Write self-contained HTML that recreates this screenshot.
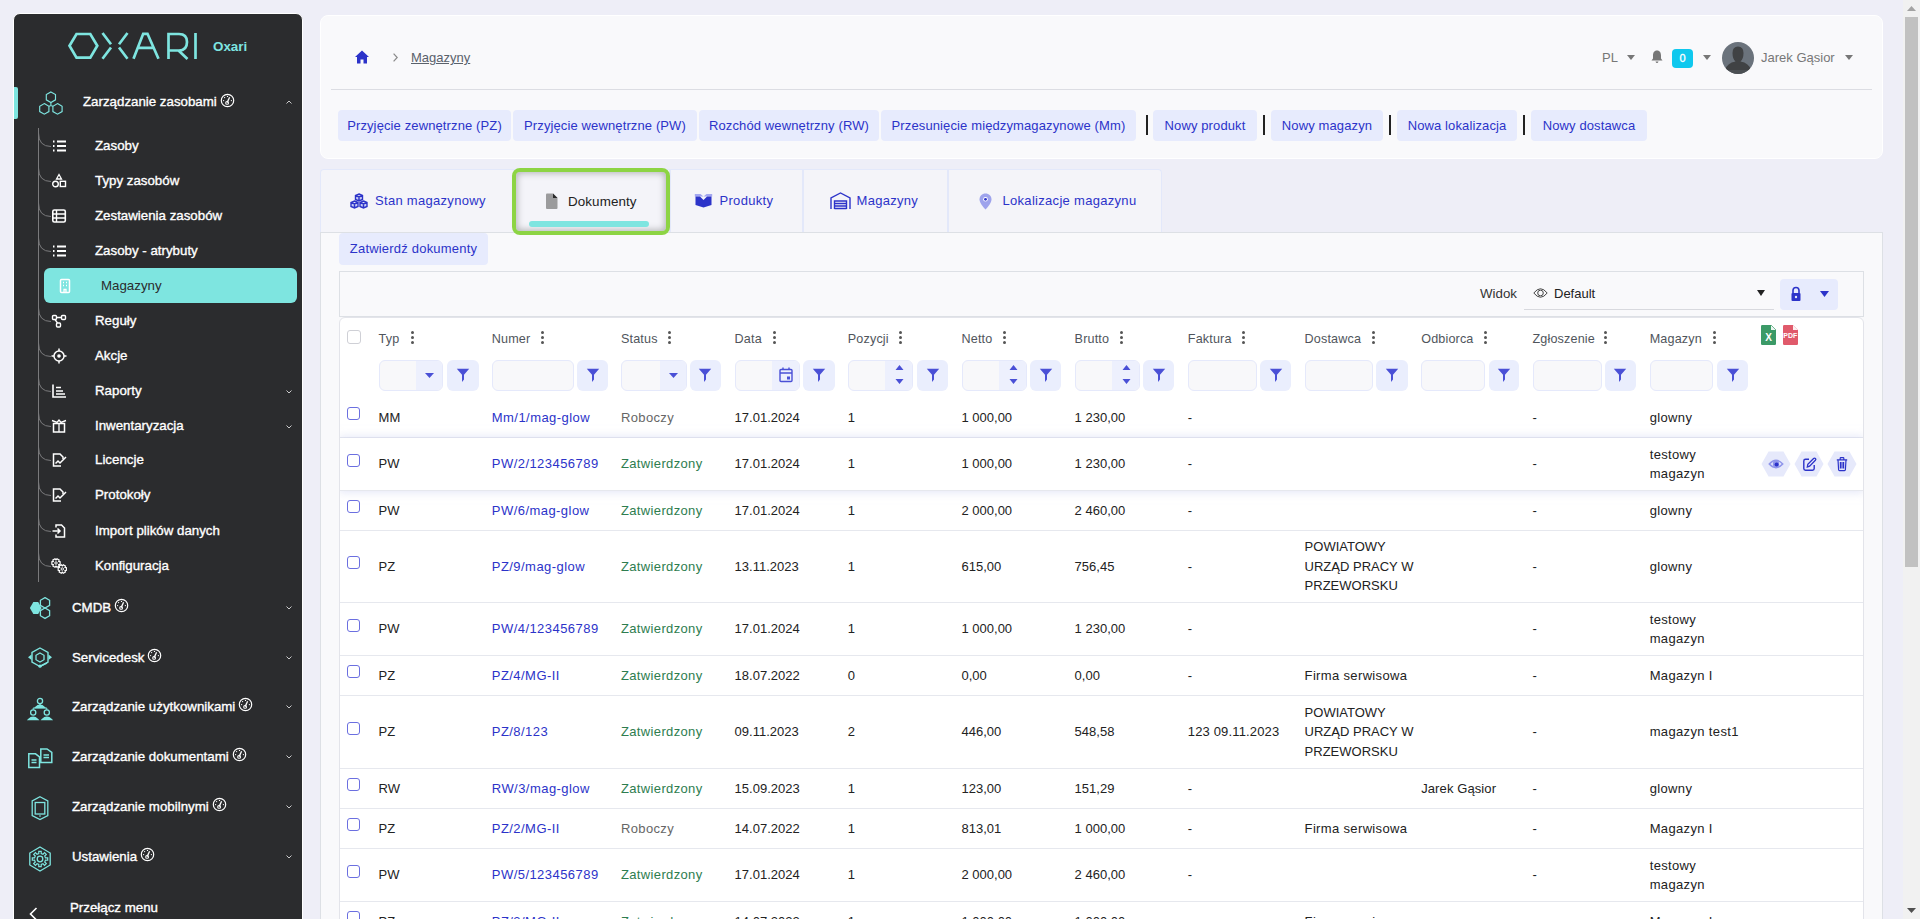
<!DOCTYPE html><html><head><meta charset="utf-8"><title>Magazyny</title><style>
*{box-sizing:border-box;margin:0;padding:0}
html,body{width:1920px;height:919px;overflow:hidden}
body{background:#eeeef7;font-family:"Liberation Sans",sans-serif;font-size:13px;color:#222;position:relative}
.abs{position:absolute}
#sb{position:absolute;left:13px;top:13px;width:290px;height:930px;background:#2b2c2e;border:1px solid #fff;border-radius:7px}
.sbt{position:absolute;color:#fff;font-size:13.3px;-webkit-text-stroke:0.35px #fff;white-space:nowrap;line-height:16px}
.sbs{position:absolute;color:#fff;font-size:13.3px;-webkit-text-stroke:0.35px #fff;white-space:nowrap;line-height:16px}
.caret{position:absolute;left:286px;width:6px;height:6px}
#hdr{position:absolute;left:320px;top:15px;width:1563px;height:144px;background:#f9f9fb;border:1px solid #fff;border-radius:8px}
.btn{position:absolute;top:110px;height:31px;background:#e7ebfd;border-radius:4px;color:#2c33c9;line-height:32px;letter-spacing:0.12px;text-align:center;white-space:nowrap}
.sep{position:absolute;top:115px;width:2px;height:20px;background:#222}
.tab{position:absolute;top:169px;height:64px;background:#f4f4f9;border:1px solid #e3e8f7;border-bottom:none;border-radius:4px 4px 0 0}
.tabt{position:absolute;color:#2c33c9;white-space:nowrap;line-height:16px;letter-spacing:0.3px}
#card{position:absolute;left:320px;top:232px;width:1563px;height:700px;background:#f9f9fb;border:1px solid #dde0e5;border-bottom:none}
.th{position:absolute;top:330.5px;color:#50555c;font-size:12.6px;letter-spacing:0.15px;white-space:nowrap;line-height:16px}
.keb{position:absolute;top:331px;width:3px;height:13px}
.fin{position:absolute;top:360px;height:31px;background:#f8f8fa;border:1px solid #e5e9fb;border-radius:6px}
.fbt{position:absolute;top:360px;height:31px;background:#eaeefd;border-radius:6px}
.row{position:absolute;left:340px;width:1523px;background:#fff;border-bottom:1px solid #e6e8ee}
.c{position:absolute;white-space:nowrap;line-height:19.5px;z-index:2}
.cb{position:absolute;left:7px;width:14px;height:14px;border:1.5px solid #6b6fd8;border-radius:3px;background:#fff}
</style></head><body>
<div id="sb"></div>
<svg class="abs" style="left:66px;top:30px" width="140" height="32" viewBox="0 0 140 32" fill="none" stroke="#7ee5e0" stroke-width="2.7">
<path d="M10.5 4 H24.3 L31.3 15.8 L24.3 27.6 H10.5 L3.5 15.8 Z"/>
<path d="M36.5 3 L45 14.3 M36.5 28.8 L45 17.5 M61.5 3 L53 14.3 M61.5 28.8 L53 17.5"/>
<path d="M67.5 28.8 L77.2 3.8 H81.5 L92.5 28.8 M72.5 17.8 H87"/>
<path d="M102.5 29 V4 H113 Q121 4 121 12 Q121 20.5 113 20.5 H102.5 M112.5 20.5 L121.5 29"/>
<path d="M129.5 3 V29"/>
</svg>
<div class="abs" style="left:213px;top:39px;color:#7ee5e0;font-weight:bold;font-size:13.4px;line-height:16px">Oxari</div>
<div class="abs" style="left:14px;top:87px;width:4px;height:32px;background:#7ee5e0;border-radius:0 2px 2px 0"></div>
<svg class="abs" style="left:37px;top:90px" width="28" height="28" viewBox="0 0 28 28" fill="none" stroke="#7ee5e0" stroke-width="1.15">
<path d="M13.9 1.9000000000000004 L18.5 4.550000000000001 V9.85 L13.9 12.5 L9.3 9.85 V4.550000000000001 Z"/><path d="M7.3 13.599999999999998 L11.899999999999999 16.25 V21.549999999999997 L7.3 24.2 L2.7 21.549999999999997 V16.25 Z"/><path d="M20.5 13.599999999999998 L25.1 16.25 V21.549999999999997 L20.5 24.2 L15.9 21.549999999999997 V16.25 Z"/><path d="M13.9 12.5 V15.8 M11.9 16.2 L13.9 15.4 L15.9 16.2"/></svg>
<div class="sbt" style="left:83px;top:94px">Zarządzanie zasobami</div>
<svg class="abs" style="left:220px;top:93px" width="15" height="15" viewBox="0 0 15 15" fill="none" stroke="#fff" stroke-width="1.2"><circle cx="7.5" cy="7.5" r="6.2"/><path d="M7.1 9.6 L9.6 4.3" stroke-width="1.3"/><circle cx="7.1" cy="9.9" r="1.4" stroke-width="1.1"/><circle cx="7.5" cy="3.4" r="0.65" fill="#fff" stroke="none"/><circle cx="4.6" cy="4.6" r="0.65" fill="#fff" stroke="none"/><circle cx="3.6" cy="7.6" r="0.65" fill="#fff" stroke="none"/><circle cx="11.4" cy="7.6" r="0.65" fill="#fff" stroke="none"/></svg>
<svg class="abs" style="left:286px;top:100px" width="6" height="4" viewBox="0 0 6 4" fill="none" stroke="#ccc" stroke-width="1"><path d="M0.5 3.5 L3 1 L5.5 3.5"/></svg>
<div class="abs" style="left:38px;top:128px;width:1px;height:454px;background:#7a7a7c"></div>
<svg class="abs" style="left:38px;top:133px" width="14" height="15" viewBox="0 0 14 15" fill="none" stroke="#7a7a7c" stroke-width="1"><path d="M0.5 0 Q0.5 13.5 13 13.5"/></svg>
<svg class="abs" style="left:51px;top:138px" width="16" height="16" viewBox="0 0 16 16" fill="none" stroke="#fff" stroke-width="1.6"><path d="M6 3.5 H15 M6 8 H15 M6 12.5 H15" stroke-width="1.8"/><path d="M2 3.5 h1.5 M2 8 h1.5 M2 12.5 h1.5" stroke-width="2.2"/></svg>
<div class="sbs" style="left:95px;top:138px">Zasoby</div>
<svg class="abs" style="left:38px;top:168px" width="14" height="15" viewBox="0 0 14 15" fill="none" stroke="#7a7a7c" stroke-width="1"><path d="M0.5 0 Q0.5 13.5 13 13.5"/></svg>
<svg class="abs" style="left:51px;top:173px" width="16" height="16" viewBox="0 0 16 16" fill="none" stroke="#fff" stroke-width="1.6"><path d="M8 1.5 L10.5 6 H5.5 Z" stroke-width="1.3"/><circle cx="4.5" cy="11" r="2.8" stroke-width="1.4"/><rect x="9.3" y="8.3" width="5.2" height="5.2" stroke-width="1.4"/></svg>
<div class="sbs" style="left:95px;top:173px">Typy zasobów</div>
<svg class="abs" style="left:38px;top:203px" width="14" height="15" viewBox="0 0 14 15" fill="none" stroke="#7a7a7c" stroke-width="1"><path d="M0.5 0 Q0.5 13.5 13 13.5"/></svg>
<svg class="abs" style="left:51px;top:208px" width="16" height="16" viewBox="0 0 16 16" fill="none" stroke="#fff" stroke-width="1.6"><rect x="1.8" y="2" width="12.5" height="12" rx="1.5" stroke-width="1.6"/><path d="M1.8 6 H14.3 M1.8 10 H14.3 M5.5 2 V14" stroke-width="1.4"/></svg>
<div class="sbs" style="left:95px;top:208px">Zestawienia zasobów</div>
<svg class="abs" style="left:38px;top:238px" width="14" height="15" viewBox="0 0 14 15" fill="none" stroke="#7a7a7c" stroke-width="1"><path d="M0.5 0 Q0.5 13.5 13 13.5"/></svg>
<svg class="abs" style="left:51px;top:243px" width="16" height="16" viewBox="0 0 16 16" fill="none" stroke="#fff" stroke-width="1.6"><path d="M6 3.5 H15 M6 8 H15 M6 12.5 H15" stroke-width="1.8"/><path d="M2 3.5 h1.5 M2 8 h1.5 M2 12.5 h1.5" stroke-width="2.2"/></svg>
<div class="sbs" style="left:95px;top:243px">Zasoby - atrybuty</div>
<div class="abs" style="left:44px;top:268px;width:253px;height:35px;background:#7ee5e0;border-radius:6px"></div>
<svg class="abs" style="left:57px;top:278px" width="16" height="16" viewBox="0 0 16 16" fill="none" stroke="#fff" stroke-width="1.6"><rect x="3.5" y="1.5" width="9" height="13" rx="1" stroke-width="1.5"/><path d="M6 4.5 h1 M9 4.5 h1 M6 7.5 h1 M9 7.5 h1" stroke-width="1.5"/><path d="M7 14.5 v-3 h2 v3" stroke-width="1.3"/></svg>
<div class="sbs" style="left:101px;top:278px;color:#2b2c2e;-webkit-text-stroke:0;font-size:13.3px">Magazyny</div>
<svg class="abs" style="left:38px;top:308px" width="14" height="15" viewBox="0 0 14 15" fill="none" stroke="#7a7a7c" stroke-width="1"><path d="M0.5 0 Q0.5 13.5 13 13.5"/></svg>
<svg class="abs" style="left:51px;top:313px" width="16" height="16" viewBox="0 0 16 16" fill="none" stroke="#fff" stroke-width="1.6"><rect x="1.5" y="2.5" width="4" height="4" rx="1" stroke-width="1.4"/><rect x="10.5" y="2.5" width="4" height="4" rx="1" stroke-width="1.4"/><rect x="5.5" y="10" width="4" height="4" rx="1" stroke-width="1.4"/><path d="M5.5 4.5 H10.5 M4 6.5 L6.5 10" stroke-width="1.3"/></svg>
<div class="sbs" style="left:95px;top:313px">Reguły</div>
<svg class="abs" style="left:38px;top:343px" width="14" height="15" viewBox="0 0 14 15" fill="none" stroke="#7a7a7c" stroke-width="1"><path d="M0.5 0 Q0.5 13.5 13 13.5"/></svg>
<svg class="abs" style="left:51px;top:348px" width="16" height="16" viewBox="0 0 16 16" fill="none" stroke="#fff" stroke-width="1.6"><circle cx="8" cy="8" r="5" stroke-width="1.5"/><circle cx="8" cy="8" r="1.8" fill="#fff" stroke="none"/><path d="M8 0.5 v2.5 M8 13 v2.5 M0.5 8 h2.5 M13 8 h2.5" stroke-width="1.5"/></svg>
<div class="sbs" style="left:95px;top:348px">Akcje</div>
<svg class="abs" style="left:38px;top:378px" width="14" height="15" viewBox="0 0 14 15" fill="none" stroke="#7a7a7c" stroke-width="1"><path d="M0.5 0 Q0.5 13.5 13 13.5"/></svg>
<svg class="abs" style="left:51px;top:383px" width="16" height="16" viewBox="0 0 16 16" fill="none" stroke="#fff" stroke-width="1.6"><path d="M2 1.5 V14 H15" stroke-width="1.6"/><path d="M5 4.5 h5 M5 8 h7 M5 11 h9" stroke-width="1.6"/></svg>
<div class="sbs" style="left:95px;top:383px">Raporty</div>
<svg class="abs" style="left:286px;top:390px" width="6" height="4" viewBox="0 0 6 4" fill="none" stroke="#ccc" stroke-width="1"><path d="M0.5 0.5 L3 3 L5.5 0.5"/></svg>
<svg class="abs" style="left:38px;top:413px" width="14" height="15" viewBox="0 0 14 15" fill="none" stroke="#7a7a7c" stroke-width="1"><path d="M0.5 0 Q0.5 13.5 13 13.5"/></svg>
<svg class="abs" style="left:51px;top:418px" width="16" height="16" viewBox="0 0 16 16" fill="none" stroke="#fff" stroke-width="1.6"><path d="M2.5 5.5 H13.5 V14 H2.5 Z" stroke-width="1.5"/><path d="M1 2.5 L6 4.5 L8 2 L10 4.5 L15 2.5" stroke-width="1.4"/><path d="M8 5.5 V14" stroke-width="1.3"/></svg>
<div class="sbs" style="left:95px;top:418px">Inwentaryzacja</div>
<svg class="abs" style="left:286px;top:425px" width="6" height="4" viewBox="0 0 6 4" fill="none" stroke="#ccc" stroke-width="1"><path d="M0.5 0.5 L3 3 L5.5 0.5"/></svg>
<svg class="abs" style="left:38px;top:447px" width="14" height="15" viewBox="0 0 14 15" fill="none" stroke="#7a7a7c" stroke-width="1"><path d="M0.5 0 Q0.5 13.5 13 13.5"/></svg>
<svg class="abs" style="left:51px;top:452px" width="16" height="16" viewBox="0 0 16 16" fill="none" stroke="#fff" stroke-width="1.6"><path d="M10 14 H2.5 V2 H9 L12 5 V7" stroke-width="1.5"/><path d="M4.5 11.5 L7 9 L9 11 L15 5" stroke-width="1.5"/></svg>
<div class="sbs" style="left:95px;top:452px">Licencje</div>
<svg class="abs" style="left:38px;top:482px" width="14" height="15" viewBox="0 0 14 15" fill="none" stroke="#7a7a7c" stroke-width="1"><path d="M0.5 0 Q0.5 13.5 13 13.5"/></svg>
<svg class="abs" style="left:51px;top:487px" width="16" height="16" viewBox="0 0 16 16" fill="none" stroke="#fff" stroke-width="1.6"><path d="M10 14 H2.5 V2 H9 L12 5 V7" stroke-width="1.5"/><path d="M4.5 11.5 L7 9 L9 11 L15 5" stroke-width="1.5"/></svg>
<div class="sbs" style="left:95px;top:487px">Protokoły</div>
<svg class="abs" style="left:38px;top:518px" width="14" height="15" viewBox="0 0 14 15" fill="none" stroke="#7a7a7c" stroke-width="1"><path d="M0.5 0 Q0.5 13.5 13 13.5"/></svg>
<svg class="abs" style="left:51px;top:523px" width="16" height="16" viewBox="0 0 16 16" fill="none" stroke="#fff" stroke-width="1.6"><path d="M5 4.5 V2 H10.5 L13.5 5 V14 H5 V11.5" stroke-width="1.5"/><path d="M1.5 8 H9 M6.5 5.5 L9 8 L6.5 10.5" stroke-width="1.5"/></svg>
<div class="sbs" style="left:95px;top:523px">Import plików danych</div>
<svg class="abs" style="left:38px;top:553px" width="14" height="15" viewBox="0 0 14 15" fill="none" stroke="#7a7a7c" stroke-width="1"><path d="M0.5 0 Q0.5 13.5 13 13.5"/></svg>
<svg class="abs" style="left:51px;top:558px" width="16" height="16" viewBox="0 0 16 16" fill="none" stroke="#fff" stroke-width="1.6"><path d="M7.68 3.45 L9.12 3.76 L9.12 6.24 L7.68 6.55 L7.68 6.55 L8.13 7.94 L5.98 9.19 L5.00 8.10 L5.00 8.10 L4.02 9.19 L1.87 7.94 L2.32 6.55 L2.32 6.55 L0.88 6.24 L0.88 3.76 L2.32 3.45 L2.32 3.45 L1.87 2.06 L4.02 0.81 L5.00 1.90 L5.00 1.90 L5.98 0.81 L8.13 2.06 L7.68 3.45 Z" stroke-width="1.2"/><circle cx="5" cy="5" r="1.2" stroke-width="1"/><path d="M13.98 9.45 L15.42 9.76 L15.42 12.24 L13.98 12.55 L13.98 12.55 L14.43 13.94 L12.28 15.19 L11.30 14.10 L11.30 14.10 L10.32 15.19 L8.17 13.94 L8.62 12.55 L8.62 12.55 L7.18 12.24 L7.18 9.76 L8.62 9.45 L8.62 9.45 L8.17 8.06 L10.32 6.81 L11.30 7.90 L11.30 7.90 L12.28 6.81 L14.43 8.06 L13.98 9.45 Z" stroke-width="1.2"/><circle cx="11.3" cy="11" r="1.2" stroke-width="1"/></svg>
<div class="sbs" style="left:95px;top:558px">Konfiguracja</div>
<svg class="abs" style="left:24px;top:597px" width="32" height="28" viewBox="0 0 32 28" fill="none" stroke="#7ee5e0" stroke-width="1.3"><path d="M5.9 5 L10.8 5 L14.2 11 L10.8 17 L5.9 17 L2.5 11 Z" fill="#7ee5e0" stroke="none" transform="translate(3.4,0)"/><path d="M21 0.6 L25.6 3.3 V8.3 L21 11 L16.4 8.3 V3.3 Z"/><path d="M21 11 L25.6 13.7 V18.7 L21 21.4 L16.4 18.7 V13.7 Z"/></svg>
<div class="sbt" style="left:72px;top:600px">CMDB</div>
<svg class="abs" style="left:114px;top:598px" width="15" height="15" viewBox="0 0 15 15" fill="none" stroke="#fff" stroke-width="1.2"><circle cx="7.5" cy="7.5" r="6.2"/><path d="M7.1 9.6 L9.6 4.3" stroke-width="1.3"/><circle cx="7.1" cy="9.9" r="1.4" stroke-width="1.1"/><circle cx="7.5" cy="3.4" r="0.65" fill="#fff" stroke="none"/><circle cx="4.6" cy="4.6" r="0.65" fill="#fff" stroke="none"/><circle cx="3.6" cy="7.6" r="0.65" fill="#fff" stroke="none"/><circle cx="11.4" cy="7.6" r="0.65" fill="#fff" stroke="none"/></svg>
<svg class="abs" style="left:286px;top:606px" width="6" height="4" viewBox="0 0 6 4" fill="none" stroke="#ccc" stroke-width="1"><path d="M0.5 0.5 L3 3 L5.5 0.5"/></svg>
<svg class="abs" style="left:24px;top:647px" width="32" height="28" viewBox="0 0 32 28" fill="none" stroke="#7ee5e0" stroke-width="1.3"><path d="M16 1 L24 5.5 V15 L16 19.5 L8 15 V5.5 Z" stroke-width="1.4"/><path d="M16 6 L20 8.3 V12.7 L16 15 L12 12.7 V8.3 Z" stroke-width="1.3"/><path d="M4 10.2 L7.5 7.5 V13 Z M28 10.2 L24.5 7.5 V13 Z" fill="#7ee5e0" stroke="none"/><path d="M23 16 L16.5 19" stroke-width="1.4"/><circle cx="16" cy="19.2" r="1.6" fill="#7ee5e0" stroke="none"/></svg>
<div class="sbt" style="left:72px;top:650px">Servicedesk</div>
<svg class="abs" style="left:147px;top:648px" width="15" height="15" viewBox="0 0 15 15" fill="none" stroke="#fff" stroke-width="1.2"><circle cx="7.5" cy="7.5" r="6.2"/><path d="M7.1 9.6 L9.6 4.3" stroke-width="1.3"/><circle cx="7.1" cy="9.9" r="1.4" stroke-width="1.1"/><circle cx="7.5" cy="3.4" r="0.65" fill="#fff" stroke="none"/><circle cx="4.6" cy="4.6" r="0.65" fill="#fff" stroke="none"/><circle cx="3.6" cy="7.6" r="0.65" fill="#fff" stroke="none"/><circle cx="11.4" cy="7.6" r="0.65" fill="#fff" stroke="none"/></svg>
<svg class="abs" style="left:286px;top:656px" width="6" height="4" viewBox="0 0 6 4" fill="none" stroke="#ccc" stroke-width="1"><path d="M0.5 0.5 L3 3 L5.5 0.5"/></svg>
<svg class="abs" style="left:24px;top:696px" width="32" height="28" viewBox="0 0 32 28" fill="none" stroke="#7ee5e0" stroke-width="1.3"><circle cx="16" cy="5" r="2.6"/><path d="M11.5 11.5 Q16 7 20.5 11.5 Z" fill="#7ee5e0"/><path d="M16 8 V11" /><circle cx="9.2" cy="16.5" r="2.6"/><path d="M4.5 23.5 Q9.2 19 13.8 23.5 Z" fill="#7ee5e0"/><circle cx="22.8" cy="16.5" r="2.6"/><path d="M18.2 23.5 Q22.8 19 27.5 23.5 Z" fill="#7ee5e0"/><path d="M9.2 13.8 V12 H22.8 V13.8" stroke-width="1"/></svg>
<div class="sbt" style="left:72px;top:699px">Zarządzanie użytkownikami</div>
<svg class="abs" style="left:238px;top:697px" width="15" height="15" viewBox="0 0 15 15" fill="none" stroke="#fff" stroke-width="1.2"><circle cx="7.5" cy="7.5" r="6.2"/><path d="M7.1 9.6 L9.6 4.3" stroke-width="1.3"/><circle cx="7.1" cy="9.9" r="1.4" stroke-width="1.1"/><circle cx="7.5" cy="3.4" r="0.65" fill="#fff" stroke="none"/><circle cx="4.6" cy="4.6" r="0.65" fill="#fff" stroke="none"/><circle cx="3.6" cy="7.6" r="0.65" fill="#fff" stroke="none"/><circle cx="11.4" cy="7.6" r="0.65" fill="#fff" stroke="none"/></svg>
<svg class="abs" style="left:286px;top:705px" width="6" height="4" viewBox="0 0 6 4" fill="none" stroke="#ccc" stroke-width="1"><path d="M0.5 0.5 L3 3 L5.5 0.5"/></svg>
<svg class="abs" style="left:24px;top:746px" width="32" height="28" viewBox="0 0 32 28" fill="none" stroke="#7ee5e0" stroke-width="1.3"><path d="M4.8 7.8 H11.5 L15.5 10.8 V21.5 H4.8 Z" stroke-width="1.5"/><path d="M7.5 14 H12.5 M7.5 16.5 H12.5" stroke-width="1.3"/><path d="M16.8 3 H23 L27.8 6.5 V16.5 H16.8 Z" stroke-width="1.5"/><path d="M19.5 9 H25 M19.5 11.5 H25" stroke-width="1.3"/></svg>
<div class="sbt" style="left:72px;top:749px">Zarządzanie dokumentami</div>
<svg class="abs" style="left:232px;top:747px" width="15" height="15" viewBox="0 0 15 15" fill="none" stroke="#fff" stroke-width="1.2"><circle cx="7.5" cy="7.5" r="6.2"/><path d="M7.1 9.6 L9.6 4.3" stroke-width="1.3"/><circle cx="7.1" cy="9.9" r="1.4" stroke-width="1.1"/><circle cx="7.5" cy="3.4" r="0.65" fill="#fff" stroke="none"/><circle cx="4.6" cy="4.6" r="0.65" fill="#fff" stroke="none"/><circle cx="3.6" cy="7.6" r="0.65" fill="#fff" stroke="none"/><circle cx="11.4" cy="7.6" r="0.65" fill="#fff" stroke="none"/></svg>
<svg class="abs" style="left:286px;top:755px" width="6" height="4" viewBox="0 0 6 4" fill="none" stroke="#ccc" stroke-width="1"><path d="M0.5 0.5 L3 3 L5.5 0.5"/></svg>
<svg class="abs" style="left:24px;top:796px" width="32" height="28" viewBox="0 0 32 28" fill="none" stroke="#7ee5e0" stroke-width="1.3"><path d="M16 0.8 L23.8 5 V19.5 L16 23.5 L8.2 19.5 V5 Z" stroke-width="1.3"/><rect x="11.2" y="6.5" width="9.6" height="11.5" stroke-width="1.3"/><path d="M15 20 h2" stroke-width="1.2"/></svg>
<div class="sbt" style="left:72px;top:799px">Zarządzanie mobilnymi</div>
<svg class="abs" style="left:212px;top:797px" width="15" height="15" viewBox="0 0 15 15" fill="none" stroke="#fff" stroke-width="1.2"><circle cx="7.5" cy="7.5" r="6.2"/><path d="M7.1 9.6 L9.6 4.3" stroke-width="1.3"/><circle cx="7.1" cy="9.9" r="1.4" stroke-width="1.1"/><circle cx="7.5" cy="3.4" r="0.65" fill="#fff" stroke="none"/><circle cx="4.6" cy="4.6" r="0.65" fill="#fff" stroke="none"/><circle cx="3.6" cy="7.6" r="0.65" fill="#fff" stroke="none"/><circle cx="11.4" cy="7.6" r="0.65" fill="#fff" stroke="none"/></svg>
<svg class="abs" style="left:286px;top:805px" width="6" height="4" viewBox="0 0 6 4" fill="none" stroke="#ccc" stroke-width="1"><path d="M0.5 0.5 L3 3 L5.5 0.5"/></svg>
<svg class="abs" style="left:24px;top:846px" width="32" height="28" viewBox="0 0 32 28" fill="none" stroke="#7ee5e0" stroke-width="1.3"><path d="M16 1 L26.2 7 V19 L16 25 L5.8 19 V7 Z" stroke-width="1.3"/><path d="M21.47 11.78 L23.70 11.76 L23.70 14.24 L21.47 14.22 L20.73 16.00 L22.32 17.57 L20.57 19.32 L19.00 17.73 L17.22 18.47 L17.24 20.70 L14.76 20.70 L14.78 18.47 L13.00 17.73 L11.43 19.32 L9.68 17.57 L11.27 16.00 L10.53 14.22 L8.30 14.24 L8.30 11.76 L10.53 11.78 L11.27 10.00 L9.68 8.43 L11.43 6.68 L13.00 8.27 L14.78 7.53 L14.76 5.30 L17.24 5.30 L17.22 7.53 L19.00 8.27 L20.57 6.68 L22.32 8.43 L20.73 10.00 Z" stroke-width="1.2"/><circle cx="16" cy="13" r="2.8" stroke-width="1.3"/></svg>
<div class="sbt" style="left:72px;top:849px">Ustawienia</div>
<svg class="abs" style="left:140px;top:847px" width="15" height="15" viewBox="0 0 15 15" fill="none" stroke="#fff" stroke-width="1.2"><circle cx="7.5" cy="7.5" r="6.2"/><path d="M7.1 9.6 L9.6 4.3" stroke-width="1.3"/><circle cx="7.1" cy="9.9" r="1.4" stroke-width="1.1"/><circle cx="7.5" cy="3.4" r="0.65" fill="#fff" stroke="none"/><circle cx="4.6" cy="4.6" r="0.65" fill="#fff" stroke="none"/><circle cx="3.6" cy="7.6" r="0.65" fill="#fff" stroke="none"/><circle cx="11.4" cy="7.6" r="0.65" fill="#fff" stroke="none"/></svg>
<svg class="abs" style="left:286px;top:855px" width="6" height="4" viewBox="0 0 6 4" fill="none" stroke="#ccc" stroke-width="1"><path d="M0.5 0.5 L3 3 L5.5 0.5"/></svg>
<svg class="abs" style="left:29px;top:907px" width="9" height="14" viewBox="0 0 9 14" fill="none" stroke="#fff" stroke-width="1.6"><path d="M7.5 1 L1.5 7 L7.5 13"/></svg>
<div class="sbt" style="left:70px;top:900px">Przełącz menu</div>
<div id="hdr"></div>
<svg class="abs" style="left:355px;top:50px" width="14" height="14" viewBox="0 0 14 14"><path d="M7 0.5 L14 7 H12 V13.5 H8.5 V9.5 H5.5 V13.5 H2 V7 H0 Z" fill="#2c33c9"/></svg>
<svg class="abs" style="left:393px;top:53px" width="5" height="9" viewBox="0 0 5 9" fill="none" stroke="#8a8a8a" stroke-width="1.2"><path d="M0.6 0.6 L4.2 4.5 L0.6 8.4"/></svg>
<div class="abs" style="left:411px;top:50px;color:#5a616b;text-decoration:underline;line-height:16px">Magazyny</div>
<div class="abs" style="left:331px;top:89px;width:1541px;height:1px;background:#dcdde3"></div>
<div class="btn" style="left:338px;width:173px">Przyjęcie zewnętrzne (PZ)</div>
<div class="btn" style="left:513px;width:184px">Przyjęcie wewnętrzne (PW)</div>
<div class="btn" style="left:699px;width:180px">Rozchód wewnętrzny (RW)</div>
<div class="btn" style="left:881px;width:255px">Przesunięcie międzymagazynowe (Mm)</div>
<div class="btn" style="left:1153px;width:104px">Nowy produkt</div>
<div class="btn" style="left:1271px;width:112px">Nowy magazyn</div>
<div class="btn" style="left:1397px;width:120px">Nowa lokalizacja</div>
<div class="btn" style="left:1531px;width:116px">Nowy dostawca</div>
<div class="sep" style="left:1146px"></div>
<div class="sep" style="left:1263px"></div>
<div class="sep" style="left:1389px"></div>
<div class="sep" style="left:1523px"></div>
<div class="abs" style="left:1602px;top:50px;color:#777;line-height:16px">PL</div>
<svg class="abs" style="left:1627px;top:55px" width="8" height="5" viewBox="0 0 8 5"><path d="M0 0 H8 L4.0 5 Z" fill="#777"/></svg>
<svg class="abs" style="left:1651px;top:50px" width="12" height="13" viewBox="0 0 12 13"><path d="M6 0.5 C3 0.5 2 3 2 5.5 V8.5 L0.5 10.5 H11.5 L10 8.5 V5.5 C10 3 9 0.5 6 0.5 Z M4.5 11.5 H7.5 Q7 13 6 13 Q5 13 4.5 11.5Z" fill="#777"/></svg>
<div class="abs" style="left:1672px;top:49px;width:21px;height:19px;background:#0fc8ee;border-radius:4px;color:#fff;font-size:11px;-webkit-text-stroke:0.3px #fff;text-align:center;line-height:19px">0</div>
<svg class="abs" style="left:1703px;top:55px" width="8" height="5" viewBox="0 0 8 5"><path d="M0 0 H8 L4.0 5 Z" fill="#777"/></svg>
<svg class="abs" style="left:1722px;top:42px" width="32" height="32" viewBox="0 0 32 32"><defs><clipPath id="av"><circle cx="16" cy="16" r="16"/></clipPath></defs><circle cx="16" cy="16" r="16" fill="#6b737c"/><g clip-path="url(#av)"><path d="M16 4.5 Q21.5 4.5 21.5 11 Q21.5 17 18.5 19.5 Q27 21 29 28 H3 Q5 21 13.5 19.5 Q10.5 17 10.5 11 Q10.5 4.5 16 4.5 Z" fill="#404244"/><rect x="0" y="28" width="32" height="4" fill="#4b4f53"/></g></svg>
<div class="abs" style="left:1761px;top:50px;color:#777;line-height:16px">Jarek Gąsior</div>
<svg class="abs" style="left:1845px;top:55px" width="8" height="5" viewBox="0 0 8 5"><path d="M0 0 H8 L4.0 5 Z" fill="#777"/></svg>
<div class="abs" style="left:320px;top:169px;width:842px;height:64px;background:#f4f4f9;border:1px solid #e3e8fa;border-bottom:none;border-radius:4px 4px 0 0"></div>
<div class="abs" style="left:513px;top:170px;width:1.5px;height:62px;background:#e3e8fa"></div>
<div class="abs" style="left:669px;top:170px;width:1.5px;height:62px;background:#e3e8fa"></div>
<div class="abs" style="left:802px;top:170px;width:1.5px;height:62px;background:#e3e8fa"></div>
<div class="abs" style="left:947px;top:170px;width:1.5px;height:62px;background:#e3e8fa"></div>
<div id="card"></div>
<div class="abs" style="left:512px;top:168px;width:158px;height:67px;border:4px solid #8dd444;border-radius:8px;box-shadow:inset 0 0 7px 1px rgba(0,0,0,0.28)"></div>
<div class="abs" style="left:529px;top:221px;width:120px;height:6px;background:#7ee5e0;border-radius:3px"></div>
<svg class="abs" style="left:349px;top:193px" width="20" height="17" viewBox="0 0 20 17" fill="none" stroke="#2c33c9" stroke-width="1.4"><path d="M10 1 L13.5 2.5 V6.5 L10 8 L6.5 6.5 V2.5 Z M6.5 2.5 L10 4 L13.5 2.5 M10 4 V8" fill="#c9cdf3"/><path d="M5.5 8 L9 9.5 V13.5 L5.5 15 L2 13.5 V9.5 Z M2 9.5 L5.5 11 L9 9.5 M5.5 11 V15" fill="#c9cdf3"/><path d="M14.5 8 L18 9.5 V13.5 L14.5 15 L11 13.5 V9.5 Z M11 9.5 L14.5 11 L18 9.5 M14.5 11 V15" fill="#c9cdf3"/></svg>
<div class="tabt" style="left:375px;top:193px">Stan magazynowy</div>
<svg class="abs" style="left:545px;top:193px" width="13" height="17" viewBox="0 0 13 17"><path d="M1 1.5 Q1 0.5 2 0.5 H8 L12.5 5 V15 Q12.5 16 11.5 16 H2 Q1 16 1 15 Z" fill="#9b9b9d"/><path d="M8 0.5 L12.5 5 H8 Z" fill="#2a2a2a"/></svg>
<div class="tabt" style="left:568px;top:194px;color:#222;font-size:13.4px;letter-spacing:0.1px">Dokumenty</div>
<svg class="abs" style="left:694px;top:193px" width="19" height="15" viewBox="0 0 19 15"><path d="M0.8 1 H6.5 L9.5 3.5 L12.5 1 H18.2 V3.5 H0.8 Z" fill="#a3a7f0"/><path d="M1.5 3.5 H6 L9.5 7 L13 3.5 H17.5 V12 L9.5 14.5 L1.5 12 Z" fill="#2c33c9"/></svg>
<div class="tabt" style="left:719.5px;top:193px">Produkty</div>
<svg class="abs" style="left:830px;top:192px" width="21" height="18" viewBox="0 0 21 18" fill="none" stroke="#2c33c9" stroke-width="1.4"><path d="M1 17 V6 L10.5 1 L20 6 V17"/><path d="M4.5 17 V9 H16.5 V17 M4.5 11.5 H16.5 M4.5 14 H16.5 M4.5 16.5 H16.5"/></svg>
<div class="tabt" style="left:856.5px;top:193px">Magazyny</div>
<svg class="abs" style="left:979px;top:193px" width="13" height="17" viewBox="0 0 13 17"><path d="M6.5 0.5 C3 0.5 0.5 3 0.5 6.5 C0.5 10.5 6.5 16.5 6.5 16.5 C6.5 16.5 12.5 10.5 12.5 6.5 C12.5 3 10 0.5 6.5 0.5 Z" fill="#9ea3ec"/><circle cx="6.5" cy="6.3" r="2.3" fill="#fff"/><circle cx="6.5" cy="6.3" r="1.4" fill="#2c33c9"/></svg>
<div class="tabt" style="left:1002.5px;top:193px">Lokalizacje magazynu</div>
<div class="btn" style="left:339px;top:233px;width:149px;height:32px;line-height:31px;letter-spacing:0.2px">Zatwierdź dokumenty</div>
<div class="abs" style="left:339px;top:271px;width:1525px;height:46px;border:1px solid #dde0e5;background:#f9f9fb"></div>
<div class="abs" style="left:1480px;top:286px;color:#333;line-height:16px;font-size:13.3px">Widok</div>
<svg class="abs" style="left:1533px;top:286px" width="15" height="14" viewBox="0 0 15 14" fill="none" stroke="#444" stroke-width="1"><path d="M0.8 7 Q7.5 -1.5 14.2 7 Q7.5 15.5 0.8 7 Z"/><circle cx="7.5" cy="7" r="2.8"/></svg>
<div class="abs" style="left:1554px;top:286px;color:#222;line-height:16px">Default</div>
<svg class="abs" style="left:1757px;top:290px" width="8" height="6" viewBox="0 0 8 6"><path d="M0 0 H8 L4.0 6 Z" fill="#222"/></svg>
<div class="abs" style="left:1524px;top:309px;width:250px;height:1px;background:#d8d9de"></div>
<div class="abs" style="left:1780px;top:279px;width:58px;height:31px;background:#e7ebfd;border-radius:4px"></div>
<svg class="abs" style="left:1790px;top:286px" width="12" height="16" viewBox="0 0 12 16"><path d="M3 7 V4.5 Q3 1.5 6 1.5 Q9 1.5 9 4.5 V7" fill="none" stroke="#2c33c9" stroke-width="1.6"/><rect x="1.5" y="7" width="9" height="8" rx="1" fill="#2c33c9"/><circle cx="6" cy="11" r="1.2" fill="#e6eafb"/></svg>
<svg class="abs" style="left:1820px;top:291px" width="9" height="6" viewBox="0 0 9 6"><path d="M0 0 H9 L4.5 6 Z" fill="#2c33c9"/></svg>
<div class="abs" style="left:339px;top:317px;width:1525px;height:700px;background:#fff;border:1px solid #e3e4ea;border-radius:6px 6px 0 0"></div>
<div class="abs" style="left:347px;top:330px;width:14px;height:14px;border:1px solid #cfd0d6;border-radius:3px;background:#fff"></div>
<div class="th" style="left:378.6px">Typ</div>
<svg class="keb" style="left:410.5px" width="3" height="13" viewBox="0 0 3 13"><circle cx="1.5" cy="1.6" r="1.5" fill="#555"/><circle cx="1.5" cy="6.5" r="1.5" fill="#555"/><circle cx="1.5" cy="11.4" r="1.5" fill="#555"/></svg>
<div class="fin" style="left:378.6px;width:64.39999999999998px"></div>
<div class="abs" style="left:416px;top:361px;width:26px;height:29px;background:#edf0fd;border-radius:0 5px 5px 0"></div>
<svg class="abs" style="left:425px;top:373px" width="9" height="5" viewBox="0 0 9 5"><path d="M0 0 H9 L4.5 5 Z" fill="#4a50d6"/></svg>
<div class="fbt" style="left:447px;width:31.600000000000023px"></div><svg class="abs" style="left:455.8px;top:368px" width="14" height="15" viewBox="0 0 14 15"><path d="M0.8 0.8 H13.2 L8 6.8 V11.5 L6 14 V6.8 Z" fill="#4a50d6"/></svg>
<div class="th" style="left:491.8px">Numer</div>
<svg class="keb" style="left:540.8px" width="3" height="13" viewBox="0 0 3 13"><circle cx="1.5" cy="1.6" r="1.5" fill="#555"/><circle cx="1.5" cy="6.5" r="1.5" fill="#555"/><circle cx="1.5" cy="11.4" r="1.5" fill="#555"/></svg>
<div class="fin" style="left:491.8px;width:82.19999999999999px"></div>
<div class="fbt" style="left:577px;width:31px"></div><svg class="abs" style="left:585.5px;top:368px" width="14" height="15" viewBox="0 0 14 15"><path d="M0.8 0.8 H13.2 L8 6.8 V11.5 L6 14 V6.8 Z" fill="#4a50d6"/></svg>
<div class="th" style="left:621px">Status</div>
<svg class="keb" style="left:667.8px" width="3" height="13" viewBox="0 0 3 13"><circle cx="1.5" cy="1.6" r="1.5" fill="#555"/><circle cx="1.5" cy="6.5" r="1.5" fill="#555"/><circle cx="1.5" cy="11.4" r="1.5" fill="#555"/></svg>
<div class="fin" style="left:621px;width:66px"></div>
<div class="abs" style="left:660px;top:361px;width:26px;height:29px;background:#edf0fd;border-radius:0 5px 5px 0"></div>
<svg class="abs" style="left:669px;top:373px" width="9" height="5" viewBox="0 0 9 5"><path d="M0 0 H9 L4.5 5 Z" fill="#4a50d6"/></svg>
<div class="fbt" style="left:690px;width:30.5px"></div><svg class="abs" style="left:698.25px;top:368px" width="14" height="15" viewBox="0 0 14 15"><path d="M0.8 0.8 H13.2 L8 6.8 V11.5 L6 14 V6.8 Z" fill="#4a50d6"/></svg>
<div class="th" style="left:734.6px">Data</div>
<svg class="keb" style="left:772.8px" width="3" height="13" viewBox="0 0 3 13"><circle cx="1.5" cy="1.6" r="1.5" fill="#555"/><circle cx="1.5" cy="6.5" r="1.5" fill="#555"/><circle cx="1.5" cy="11.4" r="1.5" fill="#555"/></svg>
<div class="fin" style="left:734.6px;width:65.39999999999998px"></div>
<div class="abs" style="left:772px;top:361px;width:27px;height:29px;background:#edf0fd;border-radius:0 5px 5px 0"></div>
<svg class="abs" style="left:779px;top:367px" width="14" height="16" viewBox="0 0 14 16" fill="none" stroke="#4a50d6" stroke-width="1.4"><rect x="1" y="2.5" width="12" height="12" rx="1"/><path d="M1 6 H13 M4 0.5 V3 M10 0.5 V3"/><rect x="8" y="9.5" width="3" height="3" fill="#4a50d6" stroke="none"/></svg>
<div class="fbt" style="left:803px;width:31.700000000000045px"></div><svg class="abs" style="left:811.85px;top:368px" width="14" height="15" viewBox="0 0 14 15"><path d="M0.8 0.8 H13.2 L8 6.8 V11.5 L6 14 V6.8 Z" fill="#4a50d6"/></svg>
<div class="th" style="left:847.8px">Pozycji</div>
<svg class="keb" style="left:898.8px" width="3" height="13" viewBox="0 0 3 13"><circle cx="1.5" cy="1.6" r="1.5" fill="#555"/><circle cx="1.5" cy="6.5" r="1.5" fill="#555"/><circle cx="1.5" cy="11.4" r="1.5" fill="#555"/></svg>
<div class="fin" style="left:847.8px;width:65.20000000000005px"></div>
<div class="abs" style="left:885px;top:361px;width:27px;height:29px;background:#edf0fd;border-radius:0 5px 5px 0"></div>
<svg class="abs" style="left:895px;top:364px" width="9" height="21" viewBox="0 0 9 21"><path d="M0.5 6 L4.5 1 L8.5 6 Z M0.5 15 L4.5 20 L8.5 15 Z" fill="#4a50d6"/></svg>
<div class="fbt" style="left:917px;width:31px"></div><svg class="abs" style="left:925.5px;top:368px" width="14" height="15" viewBox="0 0 14 15"><path d="M0.8 0.8 H13.2 L8 6.8 V11.5 L6 14 V6.8 Z" fill="#4a50d6"/></svg>
<div class="th" style="left:961.5px">Netto</div>
<svg class="keb" style="left:1002.9px" width="3" height="13" viewBox="0 0 3 13"><circle cx="1.5" cy="1.6" r="1.5" fill="#555"/><circle cx="1.5" cy="6.5" r="1.5" fill="#555"/><circle cx="1.5" cy="11.4" r="1.5" fill="#555"/></svg>
<div class="fin" style="left:961.5px;width:65.5px"></div>
<div class="abs" style="left:999px;top:361px;width:27px;height:29px;background:#edf0fd;border-radius:0 5px 5px 0"></div>
<svg class="abs" style="left:1009px;top:364px" width="9" height="21" viewBox="0 0 9 21"><path d="M0.5 6 L4.5 1 L8.5 6 Z M0.5 15 L4.5 20 L8.5 15 Z" fill="#4a50d6"/></svg>
<div class="fbt" style="left:1030px;width:31px"></div><svg class="abs" style="left:1038.5px;top:368px" width="14" height="15" viewBox="0 0 14 15"><path d="M0.8 0.8 H13.2 L8 6.8 V11.5 L6 14 V6.8 Z" fill="#4a50d6"/></svg>
<div class="th" style="left:1074.6px">Brutto</div>
<svg class="keb" style="left:1119.8px" width="3" height="13" viewBox="0 0 3 13"><circle cx="1.5" cy="1.6" r="1.5" fill="#555"/><circle cx="1.5" cy="6.5" r="1.5" fill="#555"/><circle cx="1.5" cy="11.4" r="1.5" fill="#555"/></svg>
<div class="fin" style="left:1074.6px;width:65.40000000000009px"></div>
<div class="abs" style="left:1112px;top:361px;width:27px;height:29px;background:#edf0fd;border-radius:0 5px 5px 0"></div>
<svg class="abs" style="left:1122px;top:364px" width="9" height="21" viewBox="0 0 9 21"><path d="M0.5 6 L4.5 1 L8.5 6 Z M0.5 15 L4.5 20 L8.5 15 Z" fill="#4a50d6"/></svg>
<div class="fbt" style="left:1143px;width:31px"></div><svg class="abs" style="left:1151.5px;top:368px" width="14" height="15" viewBox="0 0 14 15"><path d="M0.8 0.8 H13.2 L8 6.8 V11.5 L6 14 V6.8 Z" fill="#4a50d6"/></svg>
<div class="th" style="left:1187.8px">Faktura</div>
<svg class="keb" style="left:1241.5px" width="3" height="13" viewBox="0 0 3 13"><circle cx="1.5" cy="1.6" r="1.5" fill="#555"/><circle cx="1.5" cy="6.5" r="1.5" fill="#555"/><circle cx="1.5" cy="11.4" r="1.5" fill="#555"/></svg>
<div class="fin" style="left:1187.8px;width:69.20000000000005px"></div>
<div class="fbt" style="left:1260px;width:31px"></div><svg class="abs" style="left:1268.5px;top:368px" width="14" height="15" viewBox="0 0 14 15"><path d="M0.8 0.8 H13.2 L8 6.8 V11.5 L6 14 V6.8 Z" fill="#4a50d6"/></svg>
<div class="th" style="left:1304.6px">Dostawca</div>
<svg class="keb" style="left:1371.9px" width="3" height="13" viewBox="0 0 3 13"><circle cx="1.5" cy="1.6" r="1.5" fill="#555"/><circle cx="1.5" cy="6.5" r="1.5" fill="#555"/><circle cx="1.5" cy="11.4" r="1.5" fill="#555"/></svg>
<div class="fin" style="left:1304.6px;width:68.40000000000009px"></div>
<div class="fbt" style="left:1376px;width:32px"></div><svg class="abs" style="left:1385.0px;top:368px" width="14" height="15" viewBox="0 0 14 15"><path d="M0.8 0.8 H13.2 L8 6.8 V11.5 L6 14 V6.8 Z" fill="#4a50d6"/></svg>
<div class="th" style="left:1421.2px">Odbiorca</div>
<svg class="keb" style="left:1483.5px" width="3" height="13" viewBox="0 0 3 13"><circle cx="1.5" cy="1.6" r="1.5" fill="#555"/><circle cx="1.5" cy="6.5" r="1.5" fill="#555"/><circle cx="1.5" cy="11.4" r="1.5" fill="#555"/></svg>
<div class="fin" style="left:1421.2px;width:63.799999999999955px"></div>
<div class="fbt" style="left:1488.5px;width:30.5px"></div><svg class="abs" style="left:1496.75px;top:368px" width="14" height="15" viewBox="0 0 14 15"><path d="M0.8 0.8 H13.2 L8 6.8 V11.5 L6 14 V6.8 Z" fill="#4a50d6"/></svg>
<div class="th" style="left:1532.5px">Zgłoszenie</div>
<svg class="keb" style="left:1603.8px" width="3" height="13" viewBox="0 0 3 13"><circle cx="1.5" cy="1.6" r="1.5" fill="#555"/><circle cx="1.5" cy="6.5" r="1.5" fill="#555"/><circle cx="1.5" cy="11.4" r="1.5" fill="#555"/></svg>
<div class="fin" style="left:1532.5px;width:69.0px"></div>
<div class="fbt" style="left:1605.3px;width:30.299999999999955px"></div><svg class="abs" style="left:1613.4499999999998px;top:368px" width="14" height="15" viewBox="0 0 14 15"><path d="M0.8 0.8 H13.2 L8 6.8 V11.5 L6 14 V6.8 Z" fill="#4a50d6"/></svg>
<div class="th" style="left:1649.7px">Magazyn</div>
<svg class="keb" style="left:1712.9px" width="3" height="13" viewBox="0 0 3 13"><circle cx="1.5" cy="1.6" r="1.5" fill="#555"/><circle cx="1.5" cy="6.5" r="1.5" fill="#555"/><circle cx="1.5" cy="11.4" r="1.5" fill="#555"/></svg>
<div class="fin" style="left:1649.7px;width:63.299999999999955px"></div>
<div class="fbt" style="left:1717.3px;width:30.700000000000045px"></div><svg class="abs" style="left:1725.65px;top:368px" width="14" height="15" viewBox="0 0 14 15"><path d="M0.8 0.8 H13.2 L8 6.8 V11.5 L6 14 V6.8 Z" fill="#4a50d6"/></svg>
<svg class="abs" style="left:1761px;top:325px" width="15" height="20" viewBox="0 0 15 20"><path d="M0 1.2 Q0 0 1.2 0 H10 L15 5 V18.8 Q15 20 13.8 20 H1.2 Q0 20 0 18.8 Z" fill="#3b9a67"/><path d="M10 0 V5 H15 Z" fill="#fff" opacity="0.9"/><path d="M10 0 L15 5" stroke="#3b9a67" stroke-width="0.6"/><text x="7.5" y="16.3" font-family="Liberation Sans" font-weight="bold" font-size="10" fill="#fff" text-anchor="middle">X</text></svg>
<svg class="abs" style="left:1783px;top:325px" width="15" height="20" viewBox="0 0 15 20"><path d="M0 1.2 Q0 0 1.2 0 H10 L15 5 V18.8 Q15 20 13.8 20 H1.2 Q0 20 0 18.8 Z" fill="#e05a6b"/><path d="M10 0 V5 H15 Z" fill="#fff" opacity="0.9"/><text x="7.3" y="13.3" font-family="Liberation Sans" font-weight="bold" font-size="7" fill="#fff" text-anchor="middle" transform="scale(1,1.15)" transform-origin="7.5 13">PDF</text></svg>
<div class="row" style="top:398px;height:40px"></div>
<div class="abs" style="left:347px;top:407.3px;width:13px;height:13px;border:1.2px solid #6b6fe0;border-radius:3px;background:#fff;z-index:2"></div>
<div class="c" style="left:378.6px;top:407.75px;color:#222">MM</div>
<div class="c" style="left:491.8px;top:407.75px;color:#2c33c9;letter-spacing:0.45px">Mm/1/mag-glow</div>
<div class="c" style="left:621px;top:407.75px;color:#666;letter-spacing:0.35px">Roboczy</div>
<div class="c" style="left:734.6px;top:407.75px;color:#222">17.01.2024</div>
<div class="c" style="left:847.8px;top:407.75px;color:#222">1</div>
<div class="c" style="left:961.5px;top:407.75px;color:#222">1 000,00</div>
<div class="c" style="left:1074.6px;top:407.75px;color:#222">1 230,00</div>
<div class="c" style="left:1187.8px;top:407.75px;color:#222">-</div>
<div class="c" style="left:1532.5px;top:407.75px;color:#222">-</div>
<div class="c" style="left:1649.7px;top:407.75px;color:#222;letter-spacing:0.35px">glowny</div>
<div class="row" style="top:438px;height:53px;box-shadow:0 0 9px 1px rgba(205,210,240,0.6);clip-path:inset(-14px 0 -14px 0);z-index:1"></div>
<div class="abs" style="left:347px;top:453.8px;width:13px;height:13px;border:1.2px solid #6b6fe0;border-radius:3px;background:#fff;z-index:2"></div>
<div class="c" style="left:378.6px;top:454.25px;color:#222">PW</div>
<div class="c" style="left:491.8px;top:454.25px;color:#2c33c9;letter-spacing:0.45px">PW/2/123456789</div>
<div class="c" style="left:621px;top:454.25px;color:#2e7d4f;letter-spacing:0.35px">Zatwierdzony</div>
<div class="c" style="left:734.6px;top:454.25px;color:#222">17.01.2024</div>
<div class="c" style="left:847.8px;top:454.25px;color:#222">1</div>
<div class="c" style="left:961.5px;top:454.25px;color:#222">1 000,00</div>
<div class="c" style="left:1074.6px;top:454.25px;color:#222">1 230,00</div>
<div class="c" style="left:1187.8px;top:454.25px;color:#222">-</div>
<div class="c" style="left:1532.5px;top:454.25px;color:#222">-</div>
<div class="c" style="left:1649.7px;top:444.5px;color:#222;letter-spacing:0.35px">testowy<br>magazyn</div>
<div class="row" style="top:491px;height:40px"></div>
<div class="abs" style="left:347px;top:500.3px;width:13px;height:13px;border:1.2px solid #6b6fe0;border-radius:3px;background:#fff;z-index:2"></div>
<div class="c" style="left:378.6px;top:500.75px;color:#222">PW</div>
<div class="c" style="left:491.8px;top:500.75px;color:#2c33c9;letter-spacing:0.45px">PW/6/mag-glow</div>
<div class="c" style="left:621px;top:500.75px;color:#2e7d4f;letter-spacing:0.35px">Zatwierdzony</div>
<div class="c" style="left:734.6px;top:500.75px;color:#222">17.01.2024</div>
<div class="c" style="left:847.8px;top:500.75px;color:#222">1</div>
<div class="c" style="left:961.5px;top:500.75px;color:#222">2 000,00</div>
<div class="c" style="left:1074.6px;top:500.75px;color:#222">2 460,00</div>
<div class="c" style="left:1187.8px;top:500.75px;color:#222">-</div>
<div class="c" style="left:1532.5px;top:500.75px;color:#222">-</div>
<div class="c" style="left:1649.7px;top:500.75px;color:#222;letter-spacing:0.35px">glowny</div>
<div class="row" style="top:531px;height:72px"></div>
<div class="abs" style="left:347px;top:556.3px;width:13px;height:13px;border:1.2px solid #6b6fe0;border-radius:3px;background:#fff;z-index:2"></div>
<div class="c" style="left:378.6px;top:556.75px;color:#222">PZ</div>
<div class="c" style="left:491.8px;top:556.75px;color:#2c33c9;letter-spacing:0.45px">PZ/9/mag-glow</div>
<div class="c" style="left:621px;top:556.75px;color:#2e7d4f;letter-spacing:0.35px">Zatwierdzony</div>
<div class="c" style="left:734.6px;top:556.75px;color:#222">13.11.2023</div>
<div class="c" style="left:847.8px;top:556.75px;color:#222">1</div>
<div class="c" style="left:961.5px;top:556.75px;color:#222">615,00</div>
<div class="c" style="left:1074.6px;top:556.75px;color:#222">756,45</div>
<div class="c" style="left:1187.8px;top:556.75px;color:#222">-</div>
<div class="c" style="left:1304.6px;top:537.25px;color:#222">POWIATOWY<br>URZĄD PRACY W<br>PRZEWORSKU</div>
<div class="c" style="left:1532.5px;top:556.75px;color:#222">-</div>
<div class="c" style="left:1649.7px;top:556.75px;color:#222;letter-spacing:0.35px">glowny</div>
<div class="row" style="top:603px;height:53px"></div>
<div class="abs" style="left:347px;top:618.8px;width:13px;height:13px;border:1.2px solid #6b6fe0;border-radius:3px;background:#fff;z-index:2"></div>
<div class="c" style="left:378.6px;top:619.25px;color:#222">PW</div>
<div class="c" style="left:491.8px;top:619.25px;color:#2c33c9;letter-spacing:0.45px">PW/4/123456789</div>
<div class="c" style="left:621px;top:619.25px;color:#2e7d4f;letter-spacing:0.35px">Zatwierdzony</div>
<div class="c" style="left:734.6px;top:619.25px;color:#222">17.01.2024</div>
<div class="c" style="left:847.8px;top:619.25px;color:#222">1</div>
<div class="c" style="left:961.5px;top:619.25px;color:#222">1 000,00</div>
<div class="c" style="left:1074.6px;top:619.25px;color:#222">1 230,00</div>
<div class="c" style="left:1187.8px;top:619.25px;color:#222">-</div>
<div class="c" style="left:1532.5px;top:619.25px;color:#222">-</div>
<div class="c" style="left:1649.7px;top:609.5px;color:#222;letter-spacing:0.35px">testowy<br>magazyn</div>
<div class="row" style="top:656px;height:40px"></div>
<div class="abs" style="left:347px;top:665.3px;width:13px;height:13px;border:1.2px solid #6b6fe0;border-radius:3px;background:#fff;z-index:2"></div>
<div class="c" style="left:378.6px;top:665.75px;color:#222">PZ</div>
<div class="c" style="left:491.8px;top:665.75px;color:#2c33c9;letter-spacing:0.45px">PZ/4/MG-II</div>
<div class="c" style="left:621px;top:665.75px;color:#2e7d4f;letter-spacing:0.35px">Zatwierdzony</div>
<div class="c" style="left:734.6px;top:665.75px;color:#222">18.07.2022</div>
<div class="c" style="left:847.8px;top:665.75px;color:#222">0</div>
<div class="c" style="left:961.5px;top:665.75px;color:#222">0,00</div>
<div class="c" style="left:1074.6px;top:665.75px;color:#222">0,00</div>
<div class="c" style="left:1187.8px;top:665.75px;color:#222">-</div>
<div class="c" style="left:1304.6px;top:665.75px;color:#222;letter-spacing:0.35px">Firma serwisowa</div>
<div class="c" style="left:1532.5px;top:665.75px;color:#222">-</div>
<div class="c" style="left:1649.7px;top:665.75px;color:#222;letter-spacing:0.35px">Magazyn I</div>
<div class="row" style="top:696px;height:73px"></div>
<div class="abs" style="left:347px;top:721.8px;width:13px;height:13px;border:1.2px solid #6b6fe0;border-radius:3px;background:#fff;z-index:2"></div>
<div class="c" style="left:378.6px;top:722.25px;color:#222">PZ</div>
<div class="c" style="left:491.8px;top:722.25px;color:#2c33c9;letter-spacing:0.45px">PZ/8/123</div>
<div class="c" style="left:621px;top:722.25px;color:#2e7d4f;letter-spacing:0.35px">Zatwierdzony</div>
<div class="c" style="left:734.6px;top:722.25px;color:#222">09.11.2023</div>
<div class="c" style="left:847.8px;top:722.25px;color:#222">2</div>
<div class="c" style="left:961.5px;top:722.25px;color:#222">446,00</div>
<div class="c" style="left:1074.6px;top:722.25px;color:#222">548,58</div>
<div class="c" style="left:1187.8px;top:722.25px;color:#222;letter-spacing:0.15px">123 09.11.2023</div>
<div class="c" style="left:1304.6px;top:702.75px;color:#222">POWIATOWY<br>URZĄD PRACY W<br>PRZEWORSKU</div>
<div class="c" style="left:1532.5px;top:722.25px;color:#222">-</div>
<div class="c" style="left:1649.7px;top:722.25px;color:#222;letter-spacing:0.35px">magazyn test1</div>
<div class="row" style="top:769px;height:40px"></div>
<div class="abs" style="left:347px;top:778.3px;width:13px;height:13px;border:1.2px solid #6b6fe0;border-radius:3px;background:#fff;z-index:2"></div>
<div class="c" style="left:378.6px;top:778.75px;color:#222">RW</div>
<div class="c" style="left:491.8px;top:778.75px;color:#2c33c9;letter-spacing:0.45px">RW/3/mag-glow</div>
<div class="c" style="left:621px;top:778.75px;color:#2e7d4f;letter-spacing:0.35px">Zatwierdzony</div>
<div class="c" style="left:734.6px;top:778.75px;color:#222">15.09.2023</div>
<div class="c" style="left:847.8px;top:778.75px;color:#222">1</div>
<div class="c" style="left:961.5px;top:778.75px;color:#222">123,00</div>
<div class="c" style="left:1074.6px;top:778.75px;color:#222">151,29</div>
<div class="c" style="left:1187.8px;top:778.75px;color:#222">-</div>
<div class="c" style="left:1421.2px;top:778.75px;color:#222;letter-spacing:0.1px">Jarek Gąsior</div>
<div class="c" style="left:1532.5px;top:778.75px;color:#222">-</div>
<div class="c" style="left:1649.7px;top:778.75px;color:#222;letter-spacing:0.35px">glowny</div>
<div class="row" style="top:809px;height:40px"></div>
<div class="abs" style="left:347px;top:818.3px;width:13px;height:13px;border:1.2px solid #6b6fe0;border-radius:3px;background:#fff;z-index:2"></div>
<div class="c" style="left:378.6px;top:818.75px;color:#222">PZ</div>
<div class="c" style="left:491.8px;top:818.75px;color:#2c33c9;letter-spacing:0.45px">PZ/2/MG-II</div>
<div class="c" style="left:621px;top:818.75px;color:#666;letter-spacing:0.35px">Roboczy</div>
<div class="c" style="left:734.6px;top:818.75px;color:#222">14.07.2022</div>
<div class="c" style="left:847.8px;top:818.75px;color:#222">1</div>
<div class="c" style="left:961.5px;top:818.75px;color:#222">813,01</div>
<div class="c" style="left:1074.6px;top:818.75px;color:#222">1 000,00</div>
<div class="c" style="left:1187.8px;top:818.75px;color:#222">-</div>
<div class="c" style="left:1304.6px;top:818.75px;color:#222;letter-spacing:0.35px">Firma serwisowa</div>
<div class="c" style="left:1532.5px;top:818.75px;color:#222">-</div>
<div class="c" style="left:1649.7px;top:818.75px;color:#222;letter-spacing:0.35px">Magazyn I</div>
<div class="row" style="top:849px;height:53px"></div>
<div class="abs" style="left:347px;top:864.8px;width:13px;height:13px;border:1.2px solid #6b6fe0;border-radius:3px;background:#fff;z-index:2"></div>
<div class="c" style="left:378.6px;top:865.25px;color:#222">PW</div>
<div class="c" style="left:491.8px;top:865.25px;color:#2c33c9;letter-spacing:0.45px">PW/5/123456789</div>
<div class="c" style="left:621px;top:865.25px;color:#2e7d4f;letter-spacing:0.35px">Zatwierdzony</div>
<div class="c" style="left:734.6px;top:865.25px;color:#222">17.01.2024</div>
<div class="c" style="left:847.8px;top:865.25px;color:#222">1</div>
<div class="c" style="left:961.5px;top:865.25px;color:#222">2 000,00</div>
<div class="c" style="left:1074.6px;top:865.25px;color:#222">2 460,00</div>
<div class="c" style="left:1187.8px;top:865.25px;color:#222">-</div>
<div class="c" style="left:1532.5px;top:865.25px;color:#222">-</div>
<div class="c" style="left:1649.7px;top:855.5px;color:#222;letter-spacing:0.35px">testowy<br>magazyn</div>
<div class="row" style="top:902px;height:40px"></div>
<div class="abs" style="left:347px;top:911.3px;width:13px;height:13px;border:1.2px solid #6b6fe0;border-radius:3px;background:#fff;z-index:2"></div>
<div class="c" style="left:378.6px;top:911.75px;color:#222">PZ</div>
<div class="c" style="left:491.8px;top:911.75px;color:#2c33c9;letter-spacing:0.45px">PZ/3/MG-II</div>
<div class="c" style="left:621px;top:911.75px;color:#2e7d4f;letter-spacing:0.35px">Zatwierdzony</div>
<div class="c" style="left:734.6px;top:911.75px;color:#222">14.07.2022</div>
<div class="c" style="left:847.8px;top:911.75px;color:#222">1</div>
<div class="c" style="left:961.5px;top:911.75px;color:#222">1 000,00</div>
<div class="c" style="left:1074.6px;top:911.75px;color:#222">1 000,00</div>
<div class="c" style="left:1187.8px;top:911.75px;color:#222">-</div>
<div class="c" style="left:1304.6px;top:911.75px;color:#222;letter-spacing:0.35px">Firma serwisowa</div>
<div class="c" style="left:1532.5px;top:911.75px;color:#222">-</div>
<div class="c" style="left:1649.7px;top:911.75px;color:#222;letter-spacing:0.35px">Magazyn I</div>
<svg class="abs" style="left:1761px;top:451px;z-index:3" width="30" height="26" viewBox="0 0 30 26"><path d="M7.5 0.5 H22.5 L29.5 13 L22.5 25.5 H7.5 L0.5 13 Z" fill="#e6e9fb"/><path d="M8.3 13 Q15 5.8 21.7 13 Q15 20.2 8.3 13 Z" fill="none" stroke="#8f95ea" stroke-width="1.6"/><circle cx="15" cy="13" r="3.2" fill="#8f95ea"/><circle cx="15.6" cy="13.4" r="2" fill="#2c33c9"/></svg>
<svg class="abs" style="left:1794px;top:451px;z-index:3" width="30" height="26" viewBox="0 0 30 26"><path d="M7.5 0.5 H22.5 L29.5 13 L22.5 25.5 H7.5 L0.5 13 Z" fill="#e6e9fb"/><path d="M15 8.3 H11.5 Q9.8 8.3 9.8 10 V17.5 Q9.8 19.2 11.5 19.2 H18.5 Q20.2 19.2 20.2 17.5 V14" fill="none" stroke="#2c33c9" stroke-width="1.4"/><path d="M13.3 16 L13.8 13.3 L19.6 7.5 Q20.5 6.6 21.4 7.5 Q22.3 8.4 21.4 9.3 L15.6 15.1 Z" fill="none" stroke="#2c33c9" stroke-width="1.3"/></svg>
<svg class="abs" style="left:1827px;top:451px;z-index:3" width="30" height="26" viewBox="0 0 30 26"><path d="M7.5 0.5 H22.5 L29.5 13 L22.5 25.5 H7.5 L0.5 13 Z" fill="#e6e9fb"/><path d="M9.8 8.8 H20.2 M13.2 8.8 V7.2 Q13.2 6.6 13.8 6.6 H16.2 Q16.8 6.6 16.8 7.2 V8.8 M11 8.8 L11.6 18.8 Q11.7 19.6 12.5 19.6 H17.5 Q18.3 19.6 18.4 18.8 L19 8.8 M13.4 11 V17.5 M15 11 V17.5 M16.6 11 V17.5" fill="none" stroke="#2c33c9" stroke-width="1.2"/></svg>
<div class="abs" style="left:1903px;top:0;width:17px;height:919px;background:#f1f1f1"></div>
<div class="abs" style="left:1905px;top:17px;width:13px;height:550px;background:#c1c1c1"></div>
<svg class="abs" style="left:1907px;top:6px" width="9" height="5" viewBox="0 0 9 5"><path d="M0 5 L4.5 0 L9 5 Z" fill="#a3a3a3"/></svg>
<svg class="abs" style="left:1907px;top:908px" width="9" height="5" viewBox="0 0 9 5"><path d="M0 0 L4.5 5 L9 0 Z" fill="#505050"/></svg>
</body></html>
